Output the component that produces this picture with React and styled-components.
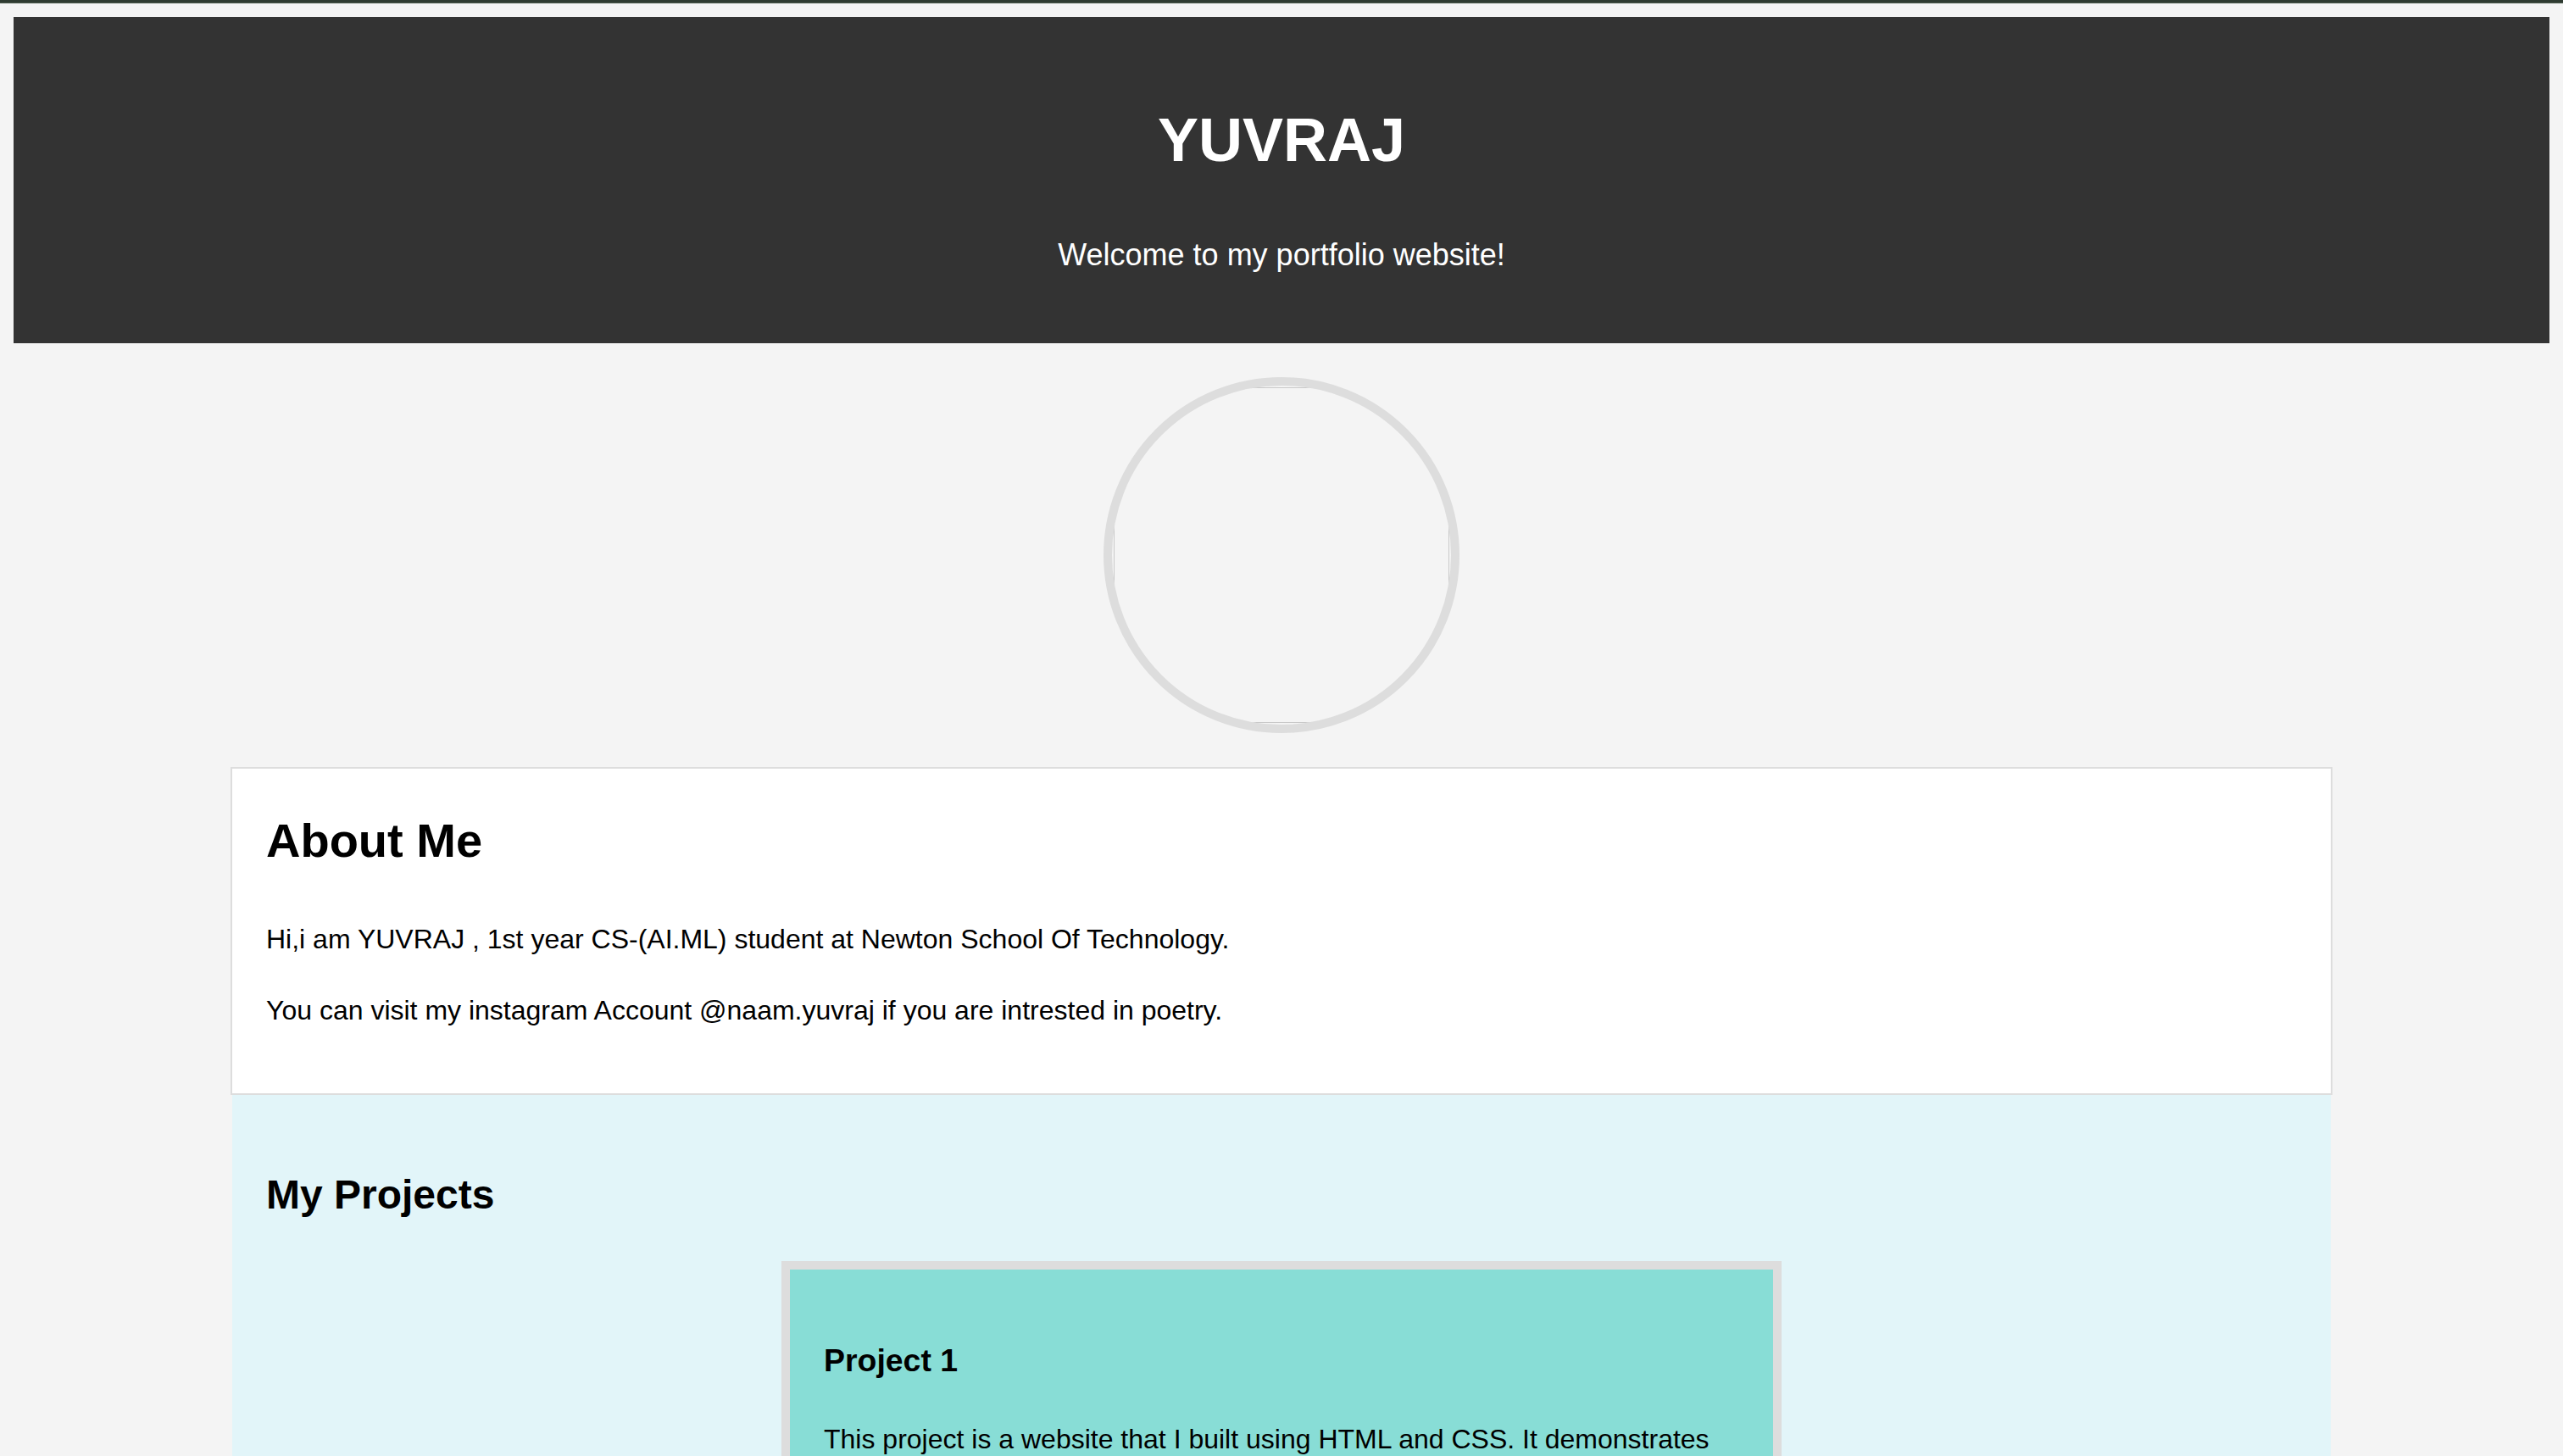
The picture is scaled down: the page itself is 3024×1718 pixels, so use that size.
import styled, { createGlobalStyle } from "styled-components";

const GlobalStyle = createGlobalStyle`
  html, body {
    margin: 0;
    padding: 0;
    background: #f4f4f4;
  }
`;

const TopStrip = styled.div`
  height: 3px;
  background: #2f3b31;
  border-bottom: 1px solid #4b5a4d;
`;

const Page = styled.div`
  padding: 16px;
  font-family: "Liberation Sans", Arial, Helvetica, sans-serif;
  font-size: 32px;
  line-height: 1.6;
  color: #000;
`;

const Header = styled.header`
  background: #333333;
  color: #ffffff;
  text-align: center;
  padding: 40px;
`;

const Name = styled.h1`
  font-size: 72px;
  font-weight: 700;
  margin: 48.24px 0;
`;

const Tagline = styled.p`
  font-size: 36px;
  margin: 36px 0;
`;

const Avatar = styled.div`
  width: 400px;
  height: 400px;
  margin: 40px auto;
  border: 10px solid #dddddd;
  border-radius: 50%;
  overflow: hidden;
`;

const AvatarFrame = styled.div`
  width: 396px;
  height: 396px;
  margin: 2px;
  box-sizing: border-box;
  border: 1px solid #c9c9c9;
`;

const Section = styled.section`
  width: 2396px;
  margin: 0 auto;
  padding: 40px;
  background: ${(p) => p.$bg};
  border: ${(p) => (p.$bordered ? "2px solid #dddddd" : "none")};
`;

const AboutTitle = styled.h2`
  font-size: 56px;
  margin: 0 0 46.5px;
`;

const SectionTitle = styled.h2`
  font-size: 48px;
  margin: 39.84px 0;
`;

const Text = styled.p`
  margin: 32px 0;
`;

const ProjectCard = styled.div`
  width: 1080px;
  margin: 0 auto 40px;
  padding: 40px;
  background: #88ddd6;
  border: 10px solid #dddddd;
`;

const ProjectTitle = styled.h3`
  font-size: 37.44px;
  margin: 37.44px 0;
`;

const projects = [
  {
    title: "Project 1",
    text: "This project is a website that I built using HTML and CSS. It demonstrates my skills in web design and development.",
  },
  {
    title: "Project 2",
    text: "This project is a simple web application built with JavaScript that shows how I work with the DOM and events.",
  },
];

const App = () => {
  return (
    <>
      <GlobalStyle />
      <TopStrip />
      <Page>
        <Header>
          <Name>YUVRAJ</Name>
          <Tagline>Welcome to my portfolio website!</Tagline>
        </Header>

        <Avatar>
          <AvatarFrame />
        </Avatar>

        <Section $bg="#ffffff" $bordered>
          <AboutTitle>About Me</AboutTitle>
          <Text>
            Hi,i am YUVRAJ , 1st year CS-(AI.ML) student at Newton School Of
            Technology.
          </Text>
          <Text>
            You can visit my instagram Account @naam.yuvraj if you are
            intrested in poetry.
          </Text>
        </Section>

        <Section $bg="#e2f5f9">
          <SectionTitle>My Projects</SectionTitle>
          {projects.map((p) => (
            <ProjectCard key={p.title}>
              <ProjectTitle>{p.title}</ProjectTitle>
              <Text>{p.text}</Text>
            </ProjectCard>
          ))}
        </Section>
      </Page>
    </>
  );
};

export default App;
